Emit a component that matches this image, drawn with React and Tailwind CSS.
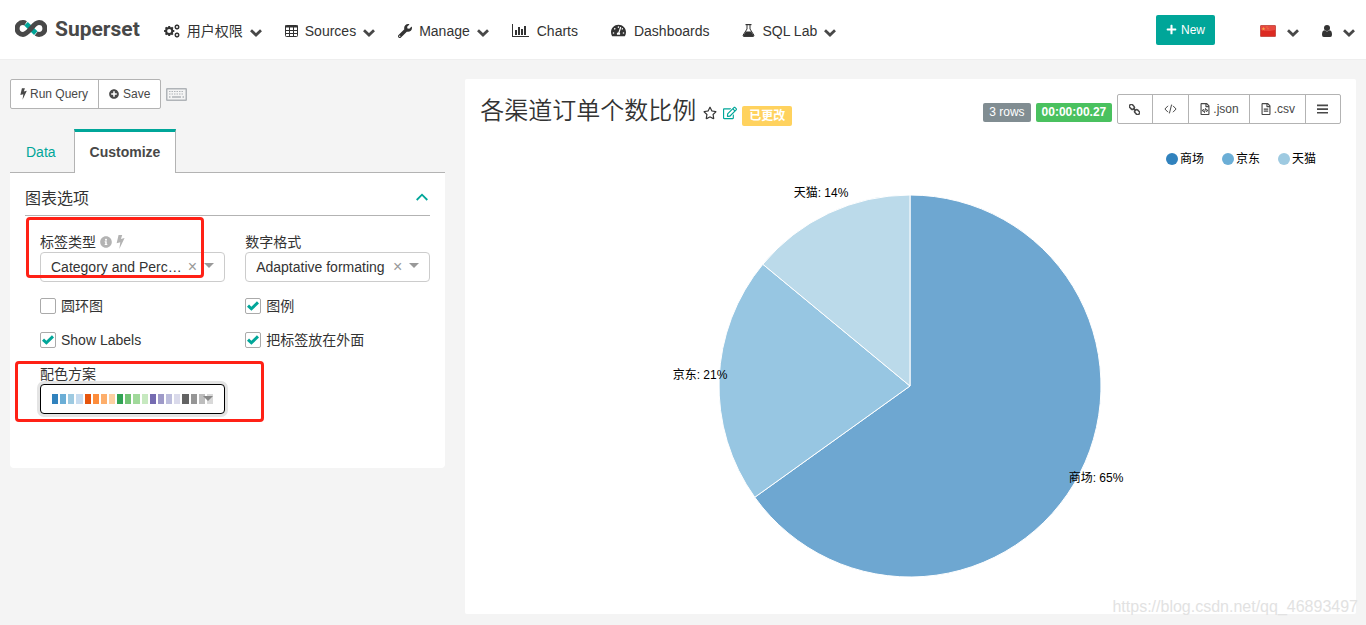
import React, { useState } from "react";
import {
  FaInfoCircle,
  FaPlus,
  FaPlusCircle,
  FaRegEdit,
  FaRegFileAlt,
  FaRegFileCode,
  FaRegStar,
  FaTachometerAlt,
  FaWrench,
} from "react-icons/fa";

function Logo() {
  return (
    <svg viewBox="0 0 32 17" className="h-[17px] w-8" fill="none" strokeWidth="5" aria-hidden="true">
      <path d="M11 3.7 L20.8 13.1" stroke="#00a699" />
      <path
        d="M10.6 3.3 C9.8 2.8 9 2.6 8 2.6 A5.9 5.9 0 0 0 8 14.4 C11.2 14.4 13 12 16 8.5 C19 5 20.8 2.6 24 2.6 A5.9 5.9 0 0 1 24 14.4 C23 14.4 22 14.1 21.2 13.5"
        stroke="#484848"
      />
    </svg>
  );
}

const TEETH = [0, 45, 90, 135];

function Gear({ x, y, r, hole }) {
  return (
    <g transform={`translate(${x} ${y})`}>
      <circle r={r} strokeWidth={hole} />
      {TEETH.map((a) => (
        <path
          key={a}
          transform={`rotate(${a})`}
          d={`M0 ${-r} V${-r - hole} M0 ${r} V${r + hole}`}
          strokeWidth={hole}
        />
      ))}
    </g>
  );
}

function GearsIcon() {
  return (
    <svg viewBox="0 0 16 14" className="h-3.5 w-4" fill="none" stroke="currentColor" aria-hidden="true">
      <Gear x={5.2} y={7} r={3.1} hole={2} />
      <Gear x={13} y={3} r={1.6} hole={1.1} />
      <Gear x={13} y={11} r={1.6} hole={1.1} />
    </svg>
  );
}

function TableIcon() {
  return (
    <svg viewBox="0 0 13 12" className="h-3 w-[13px]" fill="none" stroke="currentColor" aria-hidden="true">
      <rect x="0.5" y="0.5" width="12" height="11" rx="0.8" />
      <path d="M0 1.5 H13" strokeWidth="2" />
      <path d="M0 5.5 H13 M0 8.5 H13 M4.5 1 V12 M8.5 1 V12" />
    </svg>
  );
}

function BarChartIcon() {
  return (
    <svg viewBox="0 0 17 13" className="h-[13px] w-[17px]" fill="currentColor" aria-hidden="true">
      <path d="M0 0 H1 V12 H17 V13 H0 Z M3 6 H5 V11 H3 Z M6 3 H8 V11 H6 Z M9 5 H11 V11 H9 Z M12 2 H14 V11 H12 Z" />
    </svg>
  );
}

function FlaskIcon() {
  return (
    <svg viewBox="0 0 13 13" className="size-[13px]" fill="none" stroke="currentColor" aria-hidden="true">
      <path d="M3.5 0.6 H9.5" strokeWidth="1.2" />
      <path d="M5 1 V5 L1.2 11 Q0.6 12.4 2 12.4 H11 Q12.4 12.4 11.8 11 L8 5 V1" />
      <path d="M3.9 7.5 H9.1 L11.6 11.6 Q11.8 12.4 11 12.4 H2 Q1.2 12.4 1.4 11.6 Z" fill="currentColor" stroke="none" />
    </svg>
  );
}

function UserIcon() {
  return (
    <svg viewBox="0 0 10 12" className="h-3 w-2.5" fill="currentColor" aria-hidden="true">
      <circle cx="5" cy="3" r="3" />
      <path d="M2.3 5.3 Q5 7.6 7.7 5.3 Q10 5.6 10 9.8 Q10 12 8.2 12 H1.8 Q0 12 0 9.8 Q0 5.6 2.3 5.3 Z" />
    </svg>
  );
}

function BoltIcon({ className }) {
  return (
    <svg viewBox="0 0 8 13" className={className} fill="currentColor" aria-hidden="true">
      <path d="M2.2 0 H5.6 L4.4 3.7 L7.8 2.9 L2.9 13 L3.8 6.7 L0.4 7.6 Z" />
    </svg>
  );
}

function KeyboardIcon() {
  return (
    <svg viewBox="0 0 21 13" className="h-[13px] w-[21px]" fill="none" stroke="#b0b4b8" aria-hidden="true">
      <rect x="0.75" y="0.75" width="19.5" height="11.5" rx="0.5" strokeWidth="1.5" />
      <path d="M3 3.5 H18 M3 6 H18" strokeDasharray="1.5 1" />
      <path d="M3 9 H4.5 M6 9 H15 M16.5 9 H18" strokeWidth="1.5" />
    </svg>
  );
}

function LinkIcon() {
  return (
    <svg viewBox="0 0 11 11" className="size-[11px]" fill="none" stroke="currentColor" strokeWidth="1.5" aria-hidden="true">
      <g transform="rotate(45 5.5 5.5)">
        <rect x="-0.9" y="3.6" width="5.4" height="3.8" rx="1.8" />
        <rect x="6.5" y="3.6" width="5.4" height="3.8" rx="1.8" />
        <path d="M3.4 5.5 H7.6" />
      </g>
    </svg>
  );
}

function CodeIcon() {
  return (
    <svg viewBox="0 0 13 10" className="h-2.5 w-[13px]" fill="none" stroke="currentColor" aria-hidden="true">
      <path d="M4 1.8 L0.9 5 L4 8.2 M9 1.8 L12.1 5 L9 8.2 M7.6 0.6 L5.4 9.4" />
    </svg>
  );
}

function BarsIcon() {
  return (
    <svg viewBox="0 0 11 10" className="h-2.5 w-[11px]" fill="currentColor" aria-hidden="true">
      <path d="M0 0.5 H11 V2.2 H0 Z M0 4.2 H11 V5.9 H0 Z M0 7.9 H11 V9.6 H0 Z" />
    </svg>
  );
}

function Flag() {
  return (
    <svg viewBox="0 0 16 12" className="h-3 w-4" aria-hidden="true">
      <rect x="0.5" y="0.5" width="15" height="11" rx="0.5" fill="#dc2a22" stroke="#c9534b" />
      <path d="M1 1 H15 V5 Q8 7 1 5 Z" fill="#e8483f" />
      <path d="M3.5 1.8 L4 3.2 L5.4 3.2 L4.3 4.1 L4.7 5.5 L3.5 4.7 L2.3 5.5 L2.7 4.1 L1.6 3.2 L3 3.2 Z" fill="#f5a544" />
      <path d="M6.5 1.6 h1 v1 h-1 Z M7.5 3.2 h1 v1 h-1 Z" fill="#f0903c" />
    </svg>
  );
}

function Chevron() {
  return (
    <svg viewBox="0 0 12 8" className="mt-1 h-2 w-3" fill="none" stroke="#484848" strokeWidth="2.8" aria-hidden="true">
      <path d="M1 1.3 L6 6 L11 1.3" />
    </svg>
  );
}

function NavItem({ icon, label, menu }) {
  return (
    <li className={menu ? "" : "pr-2.5"}>
      <a href="#" className={menu ? "flex items-center gap-[7px] whitespace-nowrap" : "flex items-center gap-2 whitespace-nowrap"}>
        {icon}
        <span>{label}</span>
        {menu && <Chevron />}
      </a>
    </li>
  );
}

function Header() {
  return (
    <header className="flex h-[60px] items-center border-b border-[#eeeeee] bg-white pr-[11px] pl-[15px] text-[#333333]">
      <a href="#" className="flex items-center gap-2 pb-0.5">
        <Logo />
        <span className="font-[Roboto,sans-serif] text-[21px] leading-6 font-bold text-[#484848]">Superset</span>
      </a>
      <nav className="ml-6 pt-0.5">
        <ul className="flex items-center gap-[23px]">
          <NavItem icon={<GearsIcon />} label="用户权限" menu />
          <NavItem icon={<TableIcon />} label="Sources" menu />
          <NavItem icon={<FaWrench className="size-3.5" />} label="Manage" menu />
          <NavItem icon={<BarChartIcon />} label="Charts" />
          <NavItem icon={<FaTachometerAlt className="size-[15px]" />} label="Dashboards" />
          <NavItem icon={<FlaskIcon />} label="SQL Lab" menu />
        </ul>
      </nav>
      <div className="ml-auto flex items-center">
        <button className="flex h-[30px] items-center gap-1 rounded-xs bg-[#00a699] px-2.5 text-xs text-white">
          <FaPlus className="size-[11px]" />
          New
        </button>
        <button aria-label="语言" className="ml-[45px] flex items-center gap-[11px] pt-0.5">
          <Flag />
          <Chevron />
        </button>
        <button aria-label="用户" className="ml-[23px] flex items-center gap-[11px] pt-0.5">
          <UserIcon />
          <Chevron />
        </button>
      </div>
    </header>
  );
}

function SelectBox({ id, options }) {
  return (
    <div className="relative">
      <select
        id={id}
        className="block h-[30px] w-full appearance-none overflow-hidden rounded-sm border border-[#cccccc] bg-white pr-10 pl-2.5 text-sm text-ellipsis text-[#333333]"
      >
        {options.map((o) => (
          <option key={o}>{o}</option>
        ))}
      </select>
      <button aria-label="清除" className="absolute top-[5px] right-7 text-base leading-5 text-[#999999]">
        ×
      </button>
      <span className="pointer-events-none absolute top-[11px] right-[11px] border-x-[5px] border-t-[5px] border-x-transparent border-t-[#999999]" />
    </div>
  );
}

function Check({ label, defaultChecked }) {
  return (
    <label className="flex items-center gap-[5px] text-sm leading-5">
      <span className="grid place-items-center">
        <input
          type="checkbox"
          defaultChecked={defaultChecked}
          className="peer col-start-1 row-start-1 size-4 appearance-none rounded-xs border border-[#aaaaaa] bg-white"
        />
        <svg
          viewBox="0 0 12 10"
          className="pointer-events-none invisible col-start-1 row-start-1 h-2.5 w-3 peer-checked:visible"
          fill="none"
          stroke="#00a699"
          strokeWidth="3"
          aria-hidden="true"
        >
          <path d="M1 4.6 L4.4 7.8 L11 1.4" />
        </svg>
      </span>
      {label}
    </label>
  );
}

const SWATCHES = [
  "#3182bd", "#6baed6", "#9ecae1", "#c6dbef",
  "#e6550d", "#fd8d3c", "#fdae6b", "#fdd0a2",
  "#31a354", "#74c476", "#a1d99b", "#c7e9c0",
  "#756bb1", "#9e9ac8", "#bcbddc", "#dadaeb",
  "#636363", "#969696", "#bdbdbd", "#d9d9d9",
];

function ColorScheme() {
  return (
    <button
      id="scheme"
      aria-haspopup="listbox"
      className="relative flex h-[30px] w-full items-center rounded-sm border border-black bg-white pl-[11px] ring-3 ring-[#e4e4e4]"
    >
      <span className="grid w-[163px] grid-cols-20">
        {SWATCHES.map((c) => (
          <span key={c} className="mr-0.5 h-2.5" style={{ backgroundColor: c }} />
        ))}
      </span>
      <span className="absolute top-[11px] right-[11px] border-x-[5px] border-t-[5px] border-x-transparent border-t-[#888888]" />
    </button>
  );
}

function ControlPanel() {
  const [open, setOpen] = useState(true);
  return (
    <section className="w-1/3 shrink-0 px-2.5">
      <div className="flex items-center gap-[5px]">
        <div className="flex h-[30px] divide-x divide-[#b3b3b3] rounded-xs border border-[#b3b3b3] bg-white text-xs text-[#484848]">
          <button className="flex items-center gap-[3px] pr-2.5 pl-[9px]">
            <BoltIcon className="h-3 w-[7px]" />
            Run Query
          </button>
          <button className="flex items-center gap-1 px-2.5">
            <FaPlusCircle className="size-2.5" />
            Save
          </button>
        </div>
        <button aria-label="键盘快捷键">
          <KeyboardIcon />
        </button>
      </div>

      <div role="tablist" className="mt-5 flex h-11 text-sm">
        <button role="tab" aria-selected="false" className="border-b border-[#b3b3b3] pt-[3px] pr-[18px] pl-4 text-[#00a699]">
          Data
        </button>
        <button
          role="tab"
          aria-selected="true"
          className="border-x border-t-3 border-x-[#b3b3b3] border-t-[#00a699] bg-white px-[15px] pb-0.5 font-bold text-[#484848]"
        >
          Customize
        </button>
        <div className="flex-1 border-b border-[#b3b3b3]" />
      </div>

      <div className="relative rounded-b-sm bg-white px-[15px] pt-3.5 pb-[54px] text-[#333333]">
        <button
          onClick={() => setOpen(!open)}
          aria-expanded={open}
          className="flex w-full items-center justify-between border-b border-[#b3b3b3] pb-1 text-base leading-6"
        >
          图表选项
          <svg viewBox="0 0 12 8" className="mr-0.5 mb-1 h-2 w-3" fill="none" stroke="#00a699" strokeWidth="1.8" aria-hidden="true">
            <path d="M0.7 7 L6 1.7 L11.3 7" />
          </svg>
        </button>
        {open && (
          <div className="grid grid-cols-2 gap-x-5 gap-y-3.5 pt-4 pl-[15px]">
            <div>
              <div className="flex items-center gap-1 text-sm leading-5">
                <label htmlFor="label-type">标签类型</label>
                <FaInfoCircle className="size-3 text-[#b3b3b3]" />
                <BoltIcon className="h-3.5 w-[9px] text-[#b3b3b3]" />
              </div>
              <SelectBox id="label-type" options={["Category and Percentage", "Category", "Value"]} />
            </div>
            <div>
              <label htmlFor="number-format" className="block text-sm leading-5">
                数字格式
              </label>
              <SelectBox id="number-format" options={["Adaptative formating", "Original value"]} />
            </div>
            <Check label="圆环图" />
            <Check label="图例" defaultChecked />
            <Check label="Show Labels" defaultChecked />
            <Check label="把标签放在外面" defaultChecked />
            <div>
              <label htmlFor="scheme" className="block text-sm leading-5">
                配色方案
              </label>
              <ColorScheme />
            </div>
          </div>
        )}
        <div className="pointer-events-none absolute top-11 left-4 h-[61px] w-[178px] rounded-sm border-3 border-[#ff2116]" />
        <div className="pointer-events-none absolute top-[188px] left-[5px] h-[61px] w-[249px] rounded-sm border-3 border-[#ff2116]" />
      </div>
    </section>
  );
}

const SLICES = [
  { name: "商场", color: "#3182bd", from: 0, to: 0.651 },
  { name: "京东", color: "#6baed6", from: 0.651, to: 0.86 },
  { name: "天猫", color: "#9ecae1", from: 0.86, to: 1 },
];

function slicePath(from, to, r) {
  const point = (f) => `${r * Math.sin(2 * Math.PI * f)} ${-r * Math.cos(2 * Math.PI * f)}`;
  return `M0 0 L${point(from)} A${r} ${r} 0 ${to - from > 0.5 ? 1 : 0} 1 ${point(to)} Z`;
}

function Pie() {
  return (
    <svg viewBox="-250 -205 500 410" className="mx-auto block h-[410px] w-[500px]" role="img" aria-label="各渠道订单个数比例">
      {SLICES.map((s) => (
        <path key={s.name} d={slicePath(s.from, s.to, 191)} fill={s.color} fillOpacity="0.7" stroke="#ffffff" />
      ))}
      <g fontSize="12" fill="#000000" textAnchor="middle">
        <text x="-89" y="-189">天猫: 14%</text>
        <text x="-210" y="-7">京东: 21%</text>
        <text x="186" y="96">商场: 65%</text>
      </g>
    </svg>
  );
}

function ChartPanel() {
  return (
    <section className="min-w-0 flex-1 px-2.5">
      <div className="relative rounded-xs bg-white px-[15px] pt-[15px] pb-[23px]">
        <div className="flex items-start justify-between">
          <div className="flex items-center text-[#333333]">
            <h1 className="text-2xl leading-[34px] font-[350]">各渠道订单个数比例</h1>
            <button aria-label="收藏" className="mt-1 ml-[7px]">
              <FaRegStar className="size-3.5" />
            </button>
            <button aria-label="编辑" className="mt-1 ml-1.5 text-[#00a699]">
              <FaRegEdit className="size-3.5" />
            </button>
            <span className="mt-2.5 ml-[5px] rounded-xs bg-[#ffd25e] px-[7px] text-xs leading-5 font-bold text-white">已更改</span>
          </div>
          <div className="flex items-center gap-[5px] text-xs">
            <span className="mt-1.5 rounded-xs bg-[#818d92] px-1.5 leading-[19px] text-white">3 rows</span>
            <span className="mt-1.5 rounded-xs bg-[#4ac15f] px-1.5 leading-[19px] font-bold text-white">00:00:00.27</span>
            <div className="flex h-[30px] divide-x divide-[#b3b3b3] rounded-xs border border-[#b3b3b3] text-[#484848]">
              <button aria-label="链接" className="pr-3 pl-[11px]">
                <LinkIcon />
              </button>
              <button aria-label="嵌入代码" className="px-[11px]">
                <CodeIcon />
              </button>
              <button className="flex items-center gap-0.5 px-2.5">
                <FaRegFileCode className="size-3" />
                .json
              </button>
              <button className="flex items-center gap-0.5 px-2.5">
                <FaRegFileAlt className="size-3" />
                .csv
              </button>
              <button aria-label="菜单" className="px-3 pl-[11px]">
                <BarsIcon />
              </button>
            </div>
          </div>
        </div>
        <ul className="mt-[21px] mr-[25px] flex justify-end gap-[18px] text-xs leading-5 text-black">
          {SLICES.map((s) => (
            <li key={s.name} className="flex items-center gap-0.5">
              <span className="size-3 rounded-full" style={{ backgroundColor: s.color }} />
              {s.name}
            </li>
          ))}
        </ul>
        <div className="pt-3 pr-0.5">
          <Pie />
        </div>
        <span className="absolute -right-0.5 -bottom-[5px] text-base leading-6 text-[#e2e2e2]">
          https://blog.csdn.net/qq_46893497
        </span>
      </div>
    </section>
  );
}

export default function App() {
  return (
    <div className="min-h-screen bg-[#f4f4f4] font-['Liberation_Sans','Noto_Sans_CJK_SC',sans-serif] text-sm">
      <Header />
      <main className="flex items-start pt-[19px]">
        <ControlPanel />
        <ChartPanel />
      </main>
    </div>
  );
}
